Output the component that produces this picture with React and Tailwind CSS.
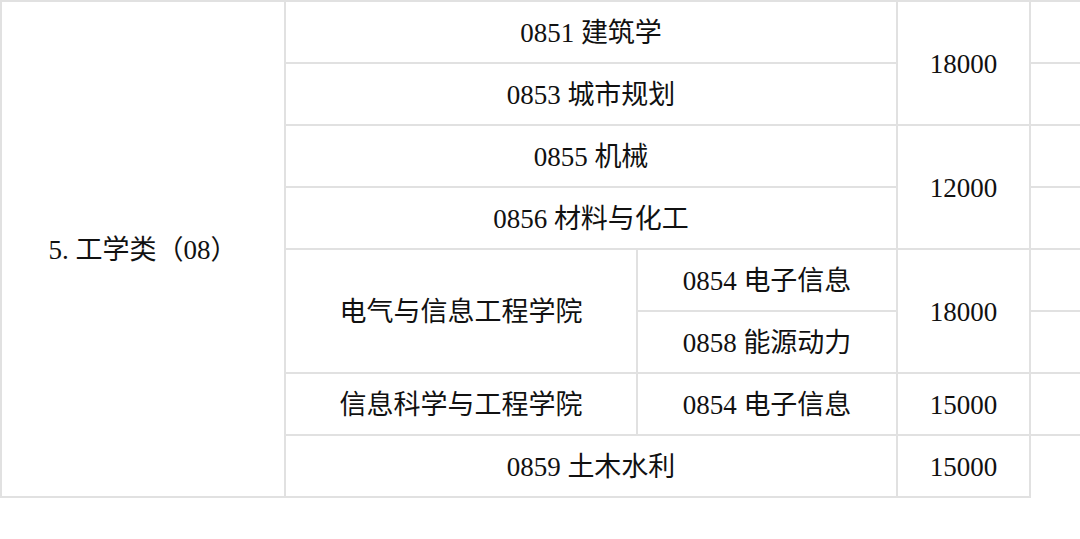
export default function App() {
  const cell = "border-2 border-[#e1e1e1] text-center align-middle p-0 pt-[3px]";
  return (
    <div className="w-[1080px] h-[539px] bg-white overflow-hidden">
      <table
        className="border-collapse table-fixed w-[1081px] text-[27px] leading-none text-[#111]"
        style={{ fontFamily: '"Liberation Serif", "Noto Sans CJK SC", serif' }}
      >
        <colgroup>
          <col className="w-[284px]" />
          <col className="w-[352px]" />
          <col className="w-[260px]" />
          <col className="w-[133px]" />
          <col className="w-[52px]" />
        </colgroup>
        <tbody>
          <tr className="h-[62px]">
            <td rowSpan={8} className={cell}>5. 工学类（08）</td>
            <td colSpan={2} className={cell}>0851 建筑学</td>
            <td rowSpan={2} className={cell}>18000</td>
            <td className={cell}></td>
          </tr>
          <tr className="h-[62px]">
            <td colSpan={2} className={cell}>0853 城市规划</td>
            <td className={cell}></td>
          </tr>
          <tr className="h-[62px]">
            <td colSpan={2} className={cell}>0855 机械</td>
            <td rowSpan={2} className={cell}>12000</td>
            <td className={cell}></td>
          </tr>
          <tr className="h-[62px]">
            <td colSpan={2} className={cell}>0856 材料与化工</td>
            <td className={cell}></td>
          </tr>
          <tr className="h-[62px]">
            <td rowSpan={2} className={cell}>电气与信息工程学院</td>
            <td className={cell}>0854 电子信息</td>
            <td rowSpan={2} className={cell}>18000</td>
            <td className={cell}></td>
          </tr>
          <tr className="h-[62px]">
            <td className={cell}>0858 能源动力</td>
            <td className={cell}></td>
          </tr>
          <tr className="h-[62px]">
            <td className={cell}>信息科学与工程学院</td>
            <td className={cell}>0854 电子信息</td>
            <td className={cell}>15000</td>
            <td className={cell}></td>
          </tr>
          <tr className="h-[62px]">
            <td colSpan={2} className={cell}>0859 土木水利</td>
            <td className={cell}>15000</td>
          </tr>
        </tbody>
      </table>
    </div>
  );
}
